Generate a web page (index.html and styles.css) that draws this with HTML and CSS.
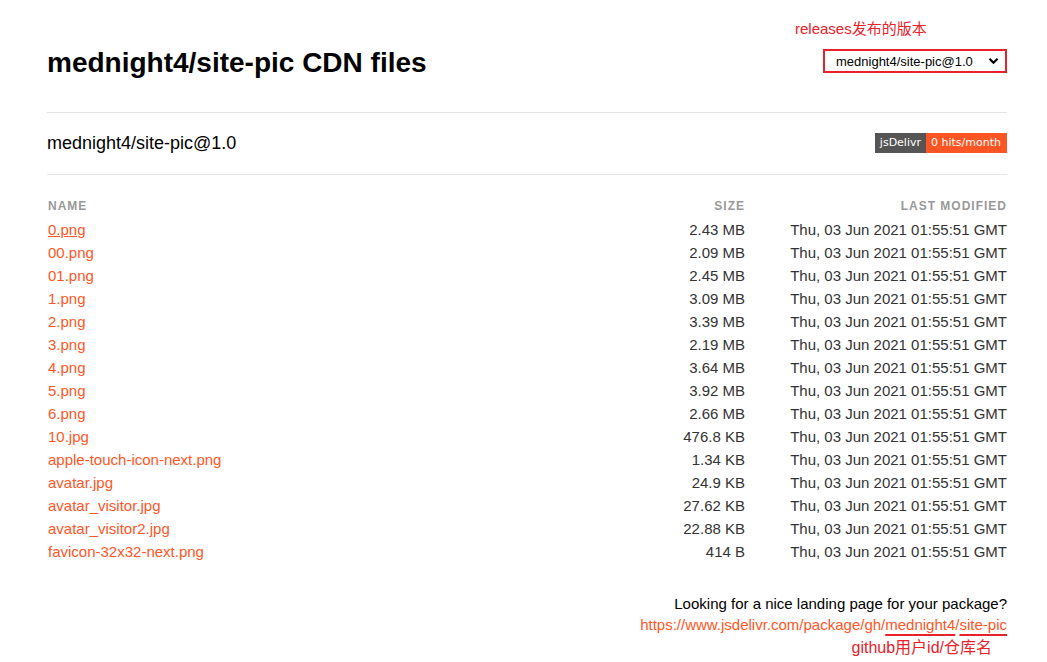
FILE: index.html
```html
<!DOCTYPE html>
<html lang="en">
<head>
<meta charset="utf-8">
<title>mednight4/site-pic CDN files</title>
<link rel="stylesheet" href="styles.css">
</head>
<body>
<div class="page">
  <header class="top">
    <h1 class="title">mednight4/site-pic CDN files</h1>
    <div class="version-box">
      <span class="note note-releases">releases发布的版本</span>
      <div class="select">
        <span class="select-text">mednight4/site-pic@1.0</span>
        <svg class="chevron" width="11" height="8" viewBox="0 0 11 8"><path d="M1.5 1.8 L5.5 5.8 L9.5 1.8" fill="none" stroke="#000" stroke-width="2.2"/></svg>
      </div>
    </div>
  </header>

  <section class="sub">
    <h2 class="subtitle">mednight4/site-pic@1.0</h2>
    <div class="badge"><span class="badge-l">jsDelivr</span><span class="badge-r">0 hits/month</span></div>
  </section>

  <table class="files">
    <thead>
      <tr><th class="c-name">Name</th><th class="c-size">Size</th><th class="c-date">Last modified</th></tr>
    </thead>
    <tbody>
      <tr><td class="c-name"><a class="hover" href="#">0.png</a></td><td class="c-size">2.43 MB</td><td class="c-date">Thu, 03 Jun 2021 01:55:51 GMT</td></tr>
      <tr><td class="c-name"><a href="#">00.png</a></td><td class="c-size">2.09 MB</td><td class="c-date">Thu, 03 Jun 2021 01:55:51 GMT</td></tr>
      <tr><td class="c-name"><a href="#">01.png</a></td><td class="c-size">2.45 MB</td><td class="c-date">Thu, 03 Jun 2021 01:55:51 GMT</td></tr>
      <tr><td class="c-name"><a href="#">1.png</a></td><td class="c-size">3.09 MB</td><td class="c-date">Thu, 03 Jun 2021 01:55:51 GMT</td></tr>
      <tr><td class="c-name"><a href="#">2.png</a></td><td class="c-size">3.39 MB</td><td class="c-date">Thu, 03 Jun 2021 01:55:51 GMT</td></tr>
      <tr><td class="c-name"><a href="#">3.png</a></td><td class="c-size">2.19 MB</td><td class="c-date">Thu, 03 Jun 2021 01:55:51 GMT</td></tr>
      <tr><td class="c-name"><a href="#">4.png</a></td><td class="c-size">3.64 MB</td><td class="c-date">Thu, 03 Jun 2021 01:55:51 GMT</td></tr>
      <tr><td class="c-name"><a href="#">5.png</a></td><td class="c-size">3.92 MB</td><td class="c-date">Thu, 03 Jun 2021 01:55:51 GMT</td></tr>
      <tr><td class="c-name"><a href="#">6.png</a></td><td class="c-size">2.66 MB</td><td class="c-date">Thu, 03 Jun 2021 01:55:51 GMT</td></tr>
      <tr><td class="c-name"><a href="#">10.jpg</a></td><td class="c-size">476.8 KB</td><td class="c-date">Thu, 03 Jun 2021 01:55:51 GMT</td></tr>
      <tr><td class="c-name"><a href="#">apple-touch-icon-next.png</a></td><td class="c-size">1.34 KB</td><td class="c-date">Thu, 03 Jun 2021 01:55:51 GMT</td></tr>
      <tr><td class="c-name"><a href="#">avatar.jpg</a></td><td class="c-size">24.9 KB</td><td class="c-date">Thu, 03 Jun 2021 01:55:51 GMT</td></tr>
      <tr><td class="c-name"><a href="#">avatar_visitor.jpg</a></td><td class="c-size">27.62 KB</td><td class="c-date">Thu, 03 Jun 2021 01:55:51 GMT</td></tr>
      <tr><td class="c-name"><a href="#">avatar_visitor2.jpg</a></td><td class="c-size">22.88 KB</td><td class="c-date">Thu, 03 Jun 2021 01:55:51 GMT</td></tr>
      <tr><td class="c-name"><a href="#">favicon-32x32-next.png</a></td><td class="c-size">414 B</td><td class="c-date">Thu, 03 Jun 2021 01:55:51 GMT</td></tr>
    </tbody>
  </table>

  <footer class="foot">
    <p class="foot-q">Looking for a nice landing page for your package?</p>
    <p class="foot-link"><a href="#">https://www.jsdelivr.com/package/gh/<span class="mark">mednight4</span>/<span class="mark">site-pic</span></a></p>
    <p class="note note-github">github用户id/仓库名</p>
  </footer>
</div>
</body>
</html>
```

FILE: styles.css
```css
html, body {
  margin: 0;
  padding: 0;
  background: #fff;
}

body {
  font-family: "Liberation Sans", Arial, sans-serif;
  color: #111;
}

.page {
  width: 960px;
  margin-left: 47px;
}

.top {
  display: flex;
  justify-content: space-between;
  align-items: center;
  padding: 40px 0 26px;
  border-bottom: 1px solid #e5e5e5;
}

.title {
  margin: 0;
  font-size: 28px;
  line-height: 46px;
  font-weight: bold;
  color: #000;
}

.version-box {
  position: relative;
  margin-top: -4px;
}

.note {
  color: #e8212b;
  font-family: "Liberation Sans", "Noto Sans CJK SC", sans-serif;
  font-size: 15px;
  white-space: nowrap;
}

.note-releases {
  position: absolute;
  left: -28px;
  top: -30px;
  line-height: 20px;
}

.select {
  height: 20px;
  border: 2px solid #e8212b;
  display: flex;
  align-items: center;
  justify-content: space-between;
  padding: 0 6px 0 11px;
  box-sizing: content-box;
  width: 163px;
  background: #fff;
}

.select-text {
  font-size: 13px;
  color: #000;
}

.chevron {
  display: block;
}

.sub {
  display: flex;
  justify-content: space-between;
  align-items: center;
  padding: 18px 0 19px;
  border-bottom: 1px solid #e5e5e5;
}

.subtitle {
  margin: 0;
  font-size: 18px;
  line-height: 24px;
  font-weight: normal;
  color: #000;
}

.badge {
  display: flex;
  font-family: "DejaVu Sans", Verdana, sans-serif;
  font-size: 11px;
  line-height: 20px;
  color: #fff;
}

.badge-l {
  background: #555;
  padding: 0 5px 0 5px;
}

.badge-r {
  background: #fe5524;
  padding: 0 6px 0 5px;
}

.files {
  width: 100%;
  border-collapse: collapse;
  margin-top: 20px;
  font-size: 15px;
}

.files th {
  font-size: 12px;
  font-weight: bold;
  text-transform: uppercase;
  letter-spacing: 1px;
  color: #999;
  height: 21px;
  padding: 0 0 2px;
}

.files td {
  height: 23px;
  padding: 0;
  color: #333;
}

.c-name {
  text-align: left;
}

.files td.c-name,
.files th.c-name {
  padding-left: 1px;
}

.c-size {
  text-align: right;
  width: 140px;
}

.c-date {
  text-align: right;
  width: 262px;
}

.files a {
  color: #ff5627;
  text-decoration: none;
}

.files a.hover {
  text-decoration: underline;
}

.foot {
  margin-top: 30px;
  text-align: right;
  font-size: 15px;
}

.foot p {
  margin: 0;
  line-height: 21px;
}

.foot-q {
  color: #000;
}

.foot-link a {
  color: #ff5627;
  text-decoration: none;
}

.mark {
  text-decoration: underline;
  text-decoration-color: #e8212b;
  text-decoration-thickness: 2px;
  text-underline-offset: 4px;
}

.foot .note-github {
  margin-top: 2px;
  margin-right: 15px;
  font-size: 16px;
  line-height: 22px;
}
```
